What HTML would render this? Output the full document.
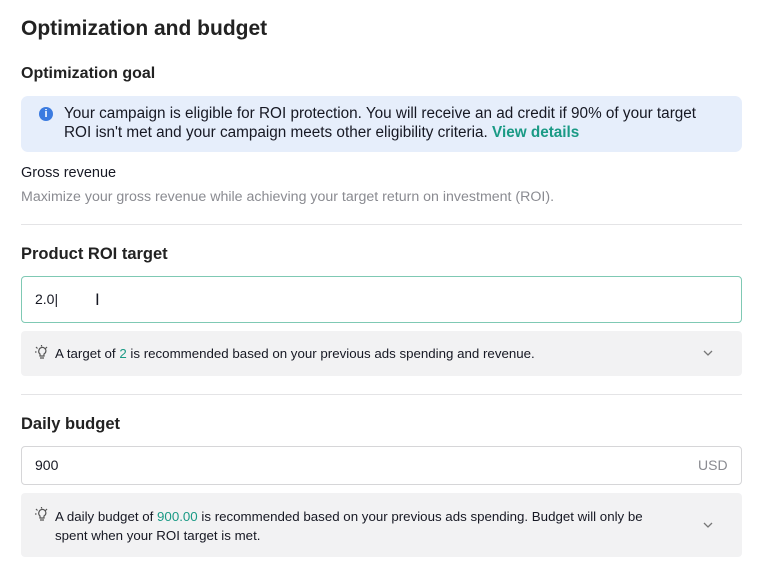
<!DOCTYPE html>
<html><head><style>
body{margin:0;width:762px;height:573px;background:#fff;font-family:"Liberation Sans",sans-serif;color:#161823;position:relative;overflow:hidden}
.a{position:absolute;white-space:nowrap}
.g{color:#1a9a85}
h{font-weight:bold}
</style></head><body>
<div class="a" style="left:21px;top:17px;font-size:21px;font-weight:bold;color:#222">Optimization and budget</div>
<div class="a" style="left:21px;top:65px;font-size:16px;font-weight:bold;color:#222">Optimization goal</div>
<div class="a" style="left:21px;top:96px;width:721px;height:56px;background:#e6eefb;border-radius:7px"></div>
<div class="a" style="left:39px;top:107px;width:14px;height:14px;border-radius:50%;background:#3b7be0;color:#fff;font-size:11px;font-weight:bold;text-align:center;line-height:14px">i</div>
<div class="a" style="left:64px;top:104px;font-size:15.3px;line-height:19px">Your campaign is eligible for ROI protection. You will receive an ad credit if 90% of your target<br>ROI isn't met and your campaign meets other eligibility criteria. <span class="g" style="font-weight:bold">View details</span></div>
<div class="a" style="left:21px;top:165px;font-size:14.5px">Gross revenue</div>
<div class="a" style="left:21px;top:189px;font-size:14.2px;color:#8a8b91">Maximize your gross revenue while achieving your target return on investment (ROI).</div>
<div class="a" style="left:21px;top:224px;width:721px;height:1px;background:#e4e4e6"></div>
<div class="a" style="left:21px;top:245px;font-size:16.5px;font-weight:bold;color:#222">Product ROI target</div>
<div class="a" style="left:21px;top:276px;width:719px;height:45px;border:1.5px solid #7fc9b4;border-radius:4px"></div>
<div class="a" style="left:35px;top:291px;font-size:14px">2.0|</div>
<div class="a" style="left:95px;top:290px;font-size:17px">I</div>
<div class="a" style="left:21px;top:331px;width:721px;height:45px;background:#f2f2f3;border-radius:4px"></div>
<svg class="a" style="left:34px;top:345px" width="15" height="15" viewBox="0 0 15 15" fill="none" stroke="#555" stroke-width="1.2"><path d="M5 5a3.5 3.5 0 1 1 5 4v2H6V9A3.5 3.5 0 0 1 5 5zM6 13h4M2 2l1.5 1.5M7.5 0v1.5M13 2l-1.5 1.5M1 7h1.5"/></svg>
<div class="a" style="left:55px;top:346px;font-size:13.3px">A target of <span class="g">2</span> is recommended based on your previous ads spending and revenue.</div>
<svg class="a" style="left:703px;top:350px" width="10" height="6" viewBox="0 0 10 6" fill="none" stroke="#777" stroke-width="1.3"><path d="M1 1l4 4 4-4"/></svg>
<div class="a" style="left:21px;top:394px;width:721px;height:1px;background:#e4e4e6"></div>
<div class="a" style="left:21px;top:415px;font-size:16.5px;font-weight:bold;color:#222">Daily budget</div>
<div class="a" style="left:21px;top:446px;width:719px;height:37px;border:1px solid #d6d6d8;border-radius:4px"></div>
<div class="a" style="left:35px;top:457px;font-size:14px">900</div>
<div class="a" style="left:698px;top:457px;font-size:14px;color:#8a8b91">USD</div>
<div class="a" style="left:21px;top:493px;width:721px;height:64px;background:#f2f2f3;border-radius:4px"></div>
<svg class="a" style="left:34px;top:507px" width="15" height="15" viewBox="0 0 15 15" fill="none" stroke="#555" stroke-width="1.2"><path d="M5 5a3.5 3.5 0 1 1 5 4v2H6V9A3.5 3.5 0 0 1 5 5zM6 13h4M2 2l1.5 1.5M7.5 0v1.5M13 2l-1.5 1.5M1 7h1.5"/></svg>
<div class="a" style="left:55px;top:507px;font-size:13.3px;line-height:19px">A daily budget of <span class="g">900.00</span> is recommended based on your previous ads spending. Budget will only be<br>spent when your ROI target is met.</div>
<svg class="a" style="left:703px;top:522px" width="10" height="6" viewBox="0 0 10 6" fill="none" stroke="#777" stroke-width="1.3"><path d="M1 1l4 4 4-4"/></svg>
</body></html>
